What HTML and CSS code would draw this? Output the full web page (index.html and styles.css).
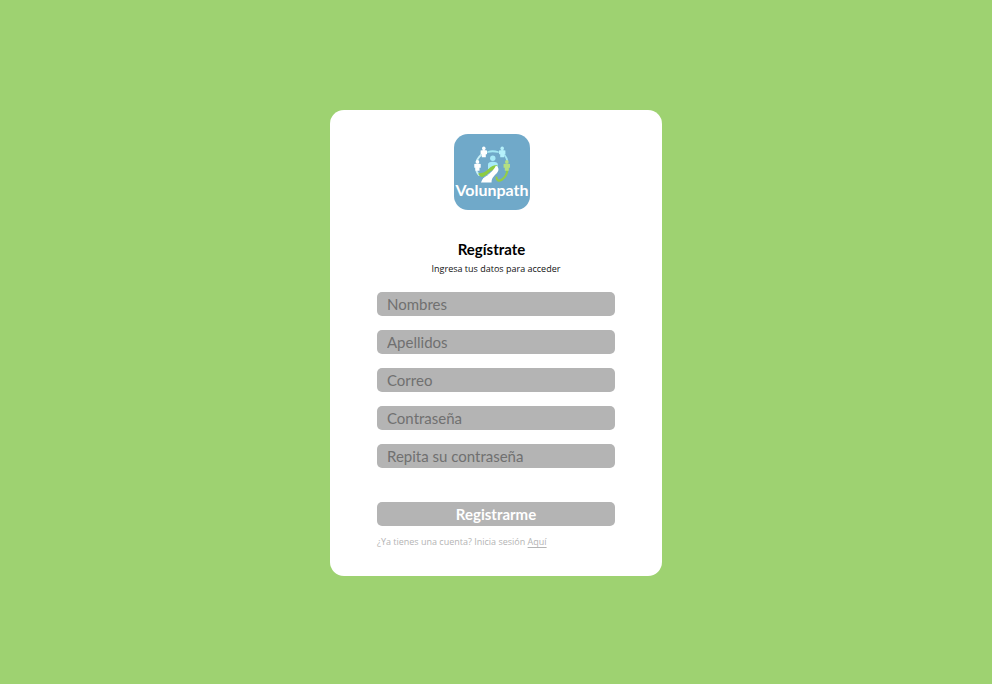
FILE: index.html
```html
<!DOCTYPE html>
<html lang="es">
<head>
<meta charset="utf-8">
<meta name="viewport" content="width=device-width, initial-scale=1">
<title>Regístrate - Volunpath</title>
<link rel="stylesheet" href="styles.css">
</head>
<body>
<main class="card">
  <header class="brand">
    <svg class="logo" viewBox="0 0 76 76" role="img" aria-label="Volunpath">
      <defs>
        <g id="person">
          <circle cx="0" cy="-3.6" r="1.8"/>
          <path d="M-3.200-1.400Q0-2.500 3.200-1.400V2.200H2V5.200H-2V2.200H-3.200Z"/>
        </g>
      </defs>
      <rect width="76" height="76" rx="14" fill="#70a9c9"/>
      <g fill="none" stroke-width="1.8" stroke-linecap="round">
        <path d="M34 18Q38.500 16.500 44 18M50.500 21Q53 24 53.300 27" stroke="#a5e8f4"/>
        <path d="M27 21Q23 25 22.500 28M22 34Q22 38 25 41" stroke="#c9f0f7"/>
        <path d="M53.500 35Q53 42 48 45.500Q43 48.500 42.500 43.500" stroke="#93cc48" stroke-width="2.200"/>
      </g>
      <use href="#person" x="29.800" y="18" fill="#fff"/>
      <use href="#person" x="48.200" y="18" fill="#b5f1fb"/>
      <use href="#person" x="23.500" y="31.500" fill="#fff"/>
      <use href="#person" x="52.800" y="31.500" fill="#b4df83"/>
      <g fill="#a8ebf8">
        <circle cx="38.800" cy="24.200" r="2.700"/>
        <path d="M34 35V30.500Q34 27.800 38.800 27.800Q43.800 27.800 43.800 30.500V35Z"/>
      </g>
      <path d="M24 39.500Q31 39 34.500 35Q38 31 43.500 31L42 35Q36 37 33 40.500Q29 44 26.500 42.500Q25 41.500 24 39.500Z" fill="#8dcc42"/>
      <path d="M27 48.500Q28.500 43.500 33.500 40.500Q39.500 37 42 31.500Q46.500 34.500 43 39Q37 44 37.500 48.500Z" fill="#fff"/>
      <path d="M28.500 44Q35 41 37.500 36.500" fill="none" stroke="#70a9c9" stroke-width="0.8"/>
      <text class="wordmark" x="38" y="62" text-anchor="middle">Volunpath</text>
    </svg>
    <h1 class="title">Regístrate</h1>
  </header>
  <p class="subtitle">Ingresa tus datos para acceder</p>
  <form class="form">
    <input class="field" type="text" name="nombres" placeholder="Nombres" aria-label="Nombres">
    <input class="field" type="text" name="apellidos" placeholder="Apellidos" aria-label="Apellidos">
    <input class="field" type="email" name="correo" placeholder="Correo" aria-label="Correo">
    <input class="field" type="password" name="clave" placeholder="Contraseña" aria-label="Contraseña">
    <input class="field" type="password" name="clave2" placeholder="Repita su contraseña" aria-label="Repita su contraseña">
    <button class="submit" type="submit">Registrarme</button>
  </form>
  <p class="login">¿Ya tienes una cuenta? Inicia sesión <a class="link" href="#">Aquí</a></p>
</main>
</body>
</html>
```
FILE: styles.css
```css
* {
  box-sizing: border-box;
}

body {
  margin: 0;
  min-height: 100vh;
  padding-top: 2px;
  display: flex;
  align-items: center;
  justify-content: center;
  background: #9ed271;
  font-family: Lato, "Open Sans", sans-serif;
}

.card {
  display: flex;
  flex-direction: column;
  width: 100%;
  max-width: 332px;
  padding: 24px 47px;
  border-radius: 14px;
  background: #fff;
}

.brand {
  display: flex;
  flex-direction: column;
  align-items: center;
  gap: 28px;
  padding-right: 9px;
}

.logo {
  width: 76px;
}

.wordmark {
  font-size: 16px;
  font-weight: 700;
  fill: #fff;
}

.title {
  margin: 0;
  font-size: 15px;
  line-height: 22px;
  font-weight: 700;
  color: #000;
}

.subtitle {
  margin: 0 0 14px;
  text-align: center;
  font-family: "Open Sans", sans-serif;
  font-size: 9px;
  line-height: 18px;
  color: #111;
}

.form {
  display: flex;
  flex-direction: column;
  gap: 14px;
}

.field,
.submit {
  width: 100%;
  height: 24px;
  border: 0;
  border-radius: 5px;
  background: #b4b4b4;
  font-family: inherit;
  font-size: 15px;
}

.field {
  padding: 0 10px;
  color: #333;
}

.field::placeholder {
  color: #707070;
  opacity: 1;
}

.submit {
  margin-top: 20px;
  padding: 0;
  font-weight: 700;
  color: #fff;
}

.login {
  margin: 8px 0 2px;
  font-family: "Open Sans", sans-serif;
  font-size: 9px;
  line-height: 16px;
  color: #b4b4b4;
}

.link {
  color: inherit;
  text-underline-offset: 2px;
}
```
